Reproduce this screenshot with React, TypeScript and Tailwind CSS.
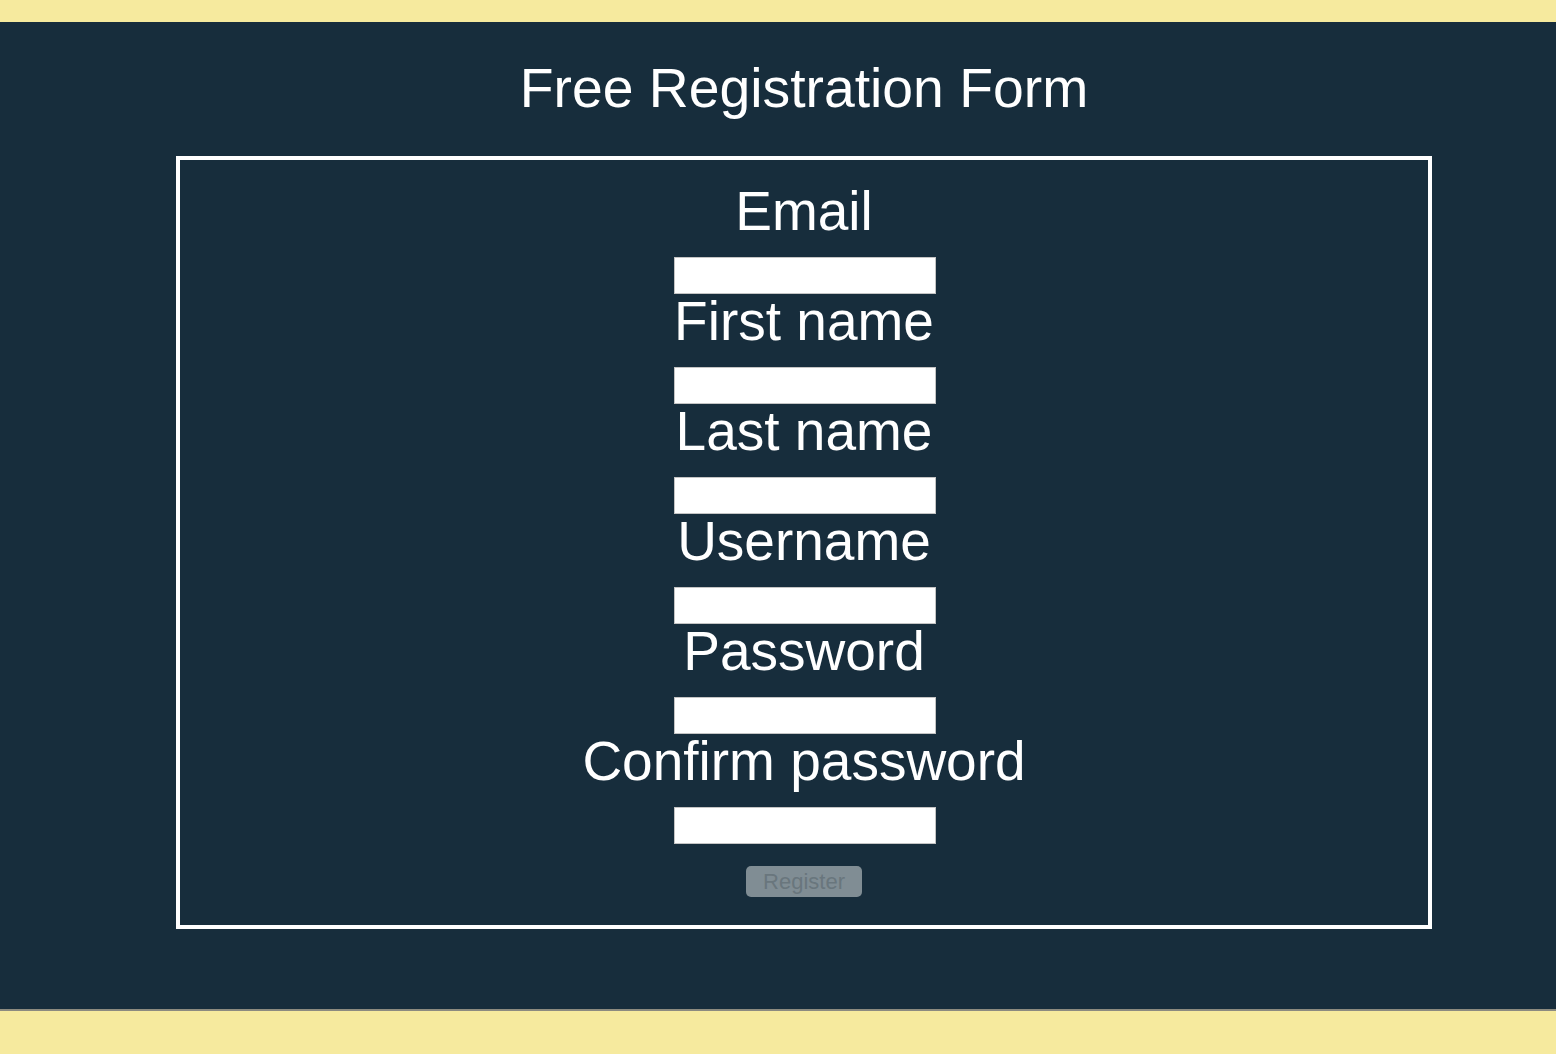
const fields = ["Email", "First name", "Last name", "Username", "Password", "Confirm password"];

function Field({ label }: { label: string }) {
  return (
    <div className="flex flex-col items-center">
      <label className="block text-[55px] leading-[54px] text-white">{label}</label>
      <input
        type="text"
        className="ml-[2px] mt-[19px] h-[37px] w-[262px] border border-solid border-[#c4c4c4] bg-white outline-none"
      />
    </div>
  );
}

export default function App() {
  return (
    <div className="min-h-[1054px] bg-[#f6ea9e] font-['Liberation_Sans',Arial,sans-serif]">
      <div className="h-[22px]" />
      <div className="bg-[#172d3c] pl-[176px] pr-[124px] pt-[39px] pb-[80px]">
        <h1 className="mb-[40px] text-center text-[55.3px] font-normal leading-[55px] text-white">
          Free Registration Form
        </h1>
        <form className="flex flex-col items-center border-4 border-white pt-[24px] pb-[28px]">
          {fields.map((f) => (
            <Field key={f} label={f} />
          ))}
          <button
            type="button"
            disabled
            className="mt-[22px] h-[31px] w-[116px] rounded-[5px] bg-[#808d94] text-[22px] leading-[31px] text-[#69767d]"
          >
            Register
          </button>
        </form>
      </div>
      <div className="h-[2px] bg-[#8c8b80]" />
      <div className="h-[44px]" />
    </div>
  );
}
